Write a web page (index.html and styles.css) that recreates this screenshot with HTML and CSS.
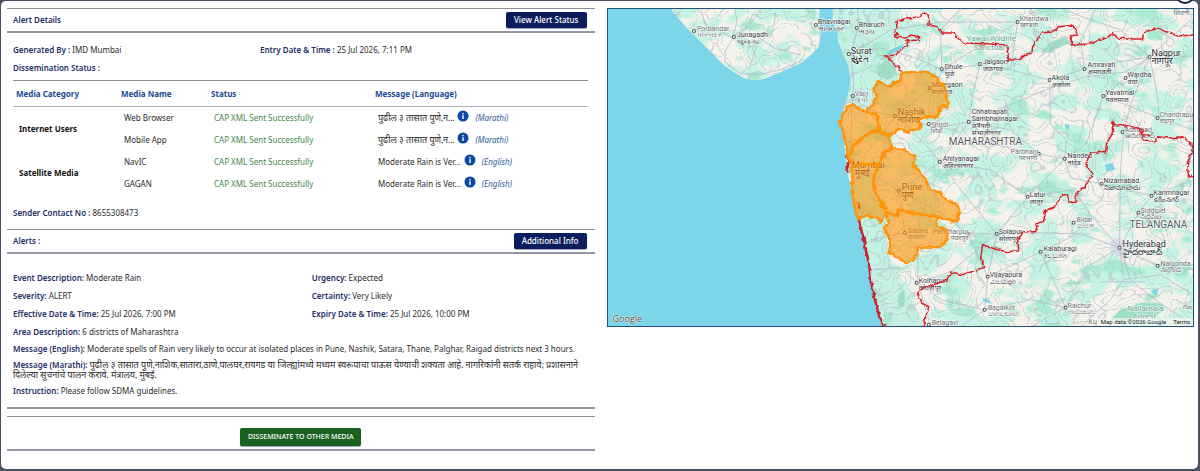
FILE: index.html
```html
<!DOCTYPE html>
<html lang="en">
<head>
<meta charset="utf-8">
<title>Alert Details</title>
<link rel="stylesheet" href="styles.css">
</head>
<body>
<svg class="defs" aria-hidden="true">
  <symbol id="info" viewBox="0 0 12 12"><circle cx="6" cy="6" r="5.5" fill="#0d47a1"/><rect x="5.3" y="5.2" width="1.4" height="3.8" fill="#fff"/><rect x="5.3" y="2.9" width="1.4" height="1.4" fill="#fff"/></symbol>
</svg>
<main class="dialog">
  <button class="close" aria-label="Close"></button>
  <section class="details">
    <header class="bar">
      <h2>Alert Details</h2>
      <button class="btn">View Alert Status</button>
    </header>
    <div class="block source">
      <div class="pair source-pair">
        <p><b>Generated By :</b> IMD Mumbai</p>
        <p><b>Entry Date &amp; Time :</b> 25 Jul 2026, 7:11 PM</p>
      </div>
      <p><b>Dissemination Status :</b></p>
      <table class="media">
        <thead>
          <tr><th class="c1">Media Category</th><th class="c2">Media Name</th><th class="c3">Status</th><th>Message (Language)</th></tr>
        </thead>
        <tbody>
          <tr><th scope="rowgroup" rowspan="2">Internet Users</th><td>Web Browser</td><td class="ok">CAP XML Sent Successfully</td><td><span class="msg"><span lang="mr">पुढील ३ तासात पुणे,न...</span><svg class="info"><use href="#info"/></svg><i>(Marathi)</i></span></td></tr>
          <tr><td>Mobile App</td><td class="ok">CAP XML Sent Successfully</td><td><span class="msg"><span lang="mr">पुढील ३ तासात पुणे,न...</span><svg class="info"><use href="#info"/></svg><i>(Marathi)</i></span></td></tr>
          <tr><th scope="rowgroup" rowspan="2">Satellite Media</th><td>NavIC</td><td class="ok">CAP XML Sent Successfully</td><td><span class="msg"><span>Moderate Rain is Ver...</span><svg class="info"><use href="#info"/></svg><i>(English)</i></span></td></tr>
          <tr><td>GAGAN</td><td class="ok">CAP XML Sent Successfully</td><td><span class="msg"><span>Moderate Rain is Ver...</span><svg class="info"><use href="#info"/></svg><i>(English)</i></span></td></tr>
        </tbody>
      </table>
      <p class="sender"><b>Sender Contact No :</b> 8655308473</p>
    </div>
    <header class="bar">
      <h2>Alerts :</h2>
      <button class="btn">Additional Info</button>
    </header>
    <div class="block alert">
      <div class="pair">
        <p><b>Event Description:</b> Moderate Rain</p>
        <p><b>Urgency:</b> Expected</p>
        <p><b>Severity:</b> ALERT</p>
        <p><b>Certainty:</b> Very Likely</p>
        <p><b>Effective Date &amp; Time:</b> 25 Jul 2026, 7:00 PM</p>
        <p><b>Expiry Date &amp; Time:</b> 25 Jul 2026, 10:00 PM</p>
      </div>
      <p><b>Area Description:</b> 6 districts of Maharashtra</p>
      <p><b>Message (English):</b> Moderate spells of Rain very likely to occur at isolated places in Pune, Nashik, Satara, Thane, Palghar, Raigad districts next 3 hours.</p>
      <p class="tight"><b>Message (Marathi):</b> <span lang="mr">पुढील ३ तासात पुणे,नाशिक,सातारा,ठाणे,पालघर,रायगड या जिल्ह्यांमध्ये मध्यम स्वरूपाचा पाऊस येण्याची शक्यता आहे. नागरिकांनी सतर्क राहावे; प्रशासनाने दिलेल्या सुचनांचे पालन करावे. मंत्रालय, मुंबई.</span></p>
      <p><b>Instruction:</b> Please follow SDMA guidelines.</p>
    </div>
    <footer class="actions"><button class="btn green">DISSEMINATE TO OTHER MEDIA</button></footer>
  </section>
  <section class="map" aria-label="Affected area map">
    <svg class="canvas" viewBox="607 9 586 317">
      <defs>
        <filter id="veg" x="0" y="0" width="100%" height="100%" color-interpolation-filters="sRGB">
          <feTurbulence type="fractalNoise" baseFrequency="0.034 0.045" numOctaves="5" seed="14"/>
          <feColorMatrix values="0 0 0 0 .77  0 0 0 0 .95  0 0 0 0 .89  8 0 0 0 -3.7"/>
        </filter>
        <filter id="forest" x="0" y="0" width="100%" height="100%" color-interpolation-filters="sRGB">
          <feTurbulence type="fractalNoise" baseFrequency="0.03 0.05" numOctaves="4" seed="31"/>
          <feColorMatrix values="0 0 0 0 .66  0 0 0 0 .92  0 0 0 0 .82  0 8 0 0 -4.9"/>
        </filter>
        <filter id="lanes" x="0" y="0" width="100%" height="100%" color-interpolation-filters="sRGB">
          <feTurbulence type="fractalNoise" baseFrequency="0.035" numOctaves="2" seed="5"/>
          <feColorMatrix values="0 0 0 0 .70  0 0 0 0 .74  0 0 0 0 .78  0 0 1 0 0"/>
          <feComponentTransfer><feFuncA type="discrete" tableValues="0 0 0 0 0 0 0 0 0 0 0 0 0 0 0 0 0 .5 0 0 0 0 .5 0 0 0 0 .5 0 0 0 0 0 0 0 0 0 0 0 0 0 0 0 0 0 0 0 0 0 0"/></feComponentTransfer>
        </filter>
        <filter id="rough" filterUnits="userSpaceOnUse" x="600" y="0" width="600" height="335">
          <feTurbulence type="fractalNoise" baseFrequency="0.22" numOctaves="2" seed="3"/>
          <feDisplacementMap in="SourceGraphic" scale="4" xChannelSelector="R" yChannelSelector="G"/>
        </filter>
        <clipPath id="land">
          <path d="M669 8L683 25L700 42L715 57L724 66L733 72L743 78L752 80L763 79L780 72L800 63L810 55L818 47L820 32L818 20L819 8Z"/>
          <path d="M832 8L832 20L837 30L837 40L843 55L848 67L850 80L847 97L842 112L840 123L843 140L845 157L846 170L850 187L854 203L858 220L863 240L868 263L871 287L875 303L880 323L884 328H1195V8Z"/>
        </clipPath>
        <path id="dots" d="M693 31h0M733 37h0M815 25h0M856 28h0M848 54h0M852 96h0M941 69h0M929 88h0M979 64h0M1017 22h0M1149 57h0M1084 69h0M1049 80h0M1125 78h0M1103 96h0M1157 118h0M968 122h0M894 116h0M928 124h0M939 162h0M898 191h0M904 233h0M967 234h0M916 283h0M928 325h0M1038 154h0M1064 159h0M1122 132h0M1101 184h0M1151 196h0M1138 213h0M1027 197h0M1073 223h0M1119 248h0M996 234h0M1040 252h0M987 277h0M984 310h0M1065 308h0M1157 266h0"/>
      </defs>
      <rect x="606" y="8" width="588" height="319" fill="#7dd5e9"/>
      <g clip-path="url(#land)">
        <rect x="606" y="8" width="588" height="319" fill="#f4f2ea"/>
        <path fill="#c5efe2" d="M832 8L900 8L892 50L898 80L870 110L850 105L846 70ZM846 160L880 200L888 255L925 327L880 327L862 240Z"/>
        <rect x="606" y="8" width="588" height="319" filter="url(#veg)"/>
        <rect x="606" y="8" width="588" height="319" filter="url(#forest)"/>
        <path fill="#9fdfc6" d="M1040 52L1050 42L1065 36L1070 43L1060 47L1048 53ZM877 66L886 60L894 66L896 74L886 80L878 76ZM1108 322L1120 310L1140 303L1162 304L1164 311L1150 318L1130 320ZM897 295L904 290L904 306L898 308Z"/>
        <rect x="606" y="8" width="588" height="319" filter="url(#lanes)"/>
        <path fill="#7dd5e9" d="M886 53L893 48L904 44L898 51L888 55ZM1104 165L1112 163L1114 170L1106 172ZM1064 124L1069 125L1068 130L1065 129ZM1150 291L1158 289L1156 296ZM985 40L988 38L987 42ZM981 298L988 300L992 304L984 302Z"/>
        <path fill="#d6dcea" d="M1110 241L1119 238L1127 243L1126 254L1118 257L1110 252ZM847 157L853 158L856 168L850 171ZM891 186L904 185L907 196L896 199Z"/>
        <g class="roads">
          <path d="M734 9L736 22L731 40L724 52L724 62L738 73L757 75L782 69L802 60M731 37L748 26L760 9M736 38L752 34L775 49L800 55M696 31L716 30L732 38M700 10L706 28L699 37M775 12L772 31L756 45L748 70"/>
          <path d="M857 8L857 28L850 54L853 85L851 110L850 150L855 168M850 54L880 48L915 58L942 70L979 65L1010 70L1049 80L1084 69L1118 62L1149 57L1195 56M942 70L931 88L895 116L856 165L898 191L904 233L917 250L917 283L930 327"/>
          <path d="M852 100L875 112L895 116L936 128L968 122L1002 108L1045 90L1084 77L1125 72L1149 57M895 116L920 140L940 162L968 122L972 95L979 65M898 191L940 162M898 191L940 213L967 234L996 234L1035 233L1080 234L1119 248"/>
          <path d="M968 122L995 145L1038 154L1064 159L1085 145L1103 96L1125 78L1149 57L1190 20M1064 159L1066 140L1050 125L1049 80M1027 197L1064 159M1027 197L996 234L987 277L984 310L960 327M1149 57L1130 105L1123 132L1120 170L1119 248M1149 57L1120 30L1085 18L1060 8M1017 22L1010 70"/>
          <path d="M1119 248L1123 280L1110 300L1080 327M1119 248L1130 280L1155 300L1193 326M1119 248L1157 266L1193 270M1119 248L1138 213L1151 196L1193 180M1119 248L1090 215L1073 190L1027 197M1119 248L1085 268L1065 308L1030 327M1040 252L1075 235M1040 252L1065 308M987 277L1040 252M917 283L950 272L996 234M872 270L900 268L917 283M904 233L870 240M984 310L1030 300L1065 308M1149 57L1156 90L1159 118L1193 130M1101 184L1151 196M967 234L987 277"/>
          <path d="M940 162L960 190L996 234M940 162L990 170L1027 197M941 70L940 30L960 8M941 70L1017 22L1040 8M850 54L890 30L940 22L1017 22M1103 96L1159 118M1084 69L1080 40L1095 10M968 122L1010 130L1038 154M1101 184L1070 178L1064 159M1123 280L1160 275L1193 295M1100 282L1145 282M917 283L940 300L984 310"/>
        </g>
      </g>
      <g class="labels region">
        <text x="948" y="142">MAHARASHTRA</text><text x="1129" y="225">TELANGANA</text>
      </g>
      <g class="labels park">
        <text x="966" y="39">Yawal Wildlife<tspan x="973" dy="8">Sanctuary</tspan></text>
        <text x="1127" y="309">Nallamala<tspan x="1133" dy="7">Forest</tspan></text>
      </g>
      <use href="#dots" class="dot ring"/>
      <use href="#dots" class="dot core"/>
      <g class="labels minor">
        <text x="696" y="29">Porbandar<tspan x="696" dy="6">પોરબંદર</tspan></text>
        <text x="854" y="94">Vapi<tspan x="854" dy="6">વાપી</tspan></text>
        <text x="1019" y="19">Khandwa<tspan x="1019" dy="6">खण्डवा</tspan></text>
        <text x="1159" y="115">Chandrapu<tspan x="1159" dy="6">चंद्रपूर</tspan></text>
        <text x="930" y="125">Shirdi<tspan x="930" dy="6">शिर्डी</tspan></text>
        <text x="1010" y="152">Parbhani<tspan x="1018" dy="6">परभणी</tspan></text>
        <text x="1124" y="130">Adilabad<tspan x="1124" dy="6">ఆదిలాబాద్</tspan></text>
        <text x="1140" y="211">Siddipet<tspan x="1140" dy="6">సిద్దిపేట</tspan></text>
        <text x="1076" y="220">Bidar<tspan x="1076" dy="6">ಬೀದರ್</tspan></text>
        <text x="932" y="232">Pandharpur<tspan x="950" dy="6">पंढरपूर</tspan></text>
        <text x="987" y="308">Bagalkot<tspan x="987" dy="6">ಬಾಗಲಕೋಟೆ</tspan></text>
        <text x="1067" y="306">Raichur<tspan x="1067" dy="6">ರಾಯಚೂರು</tspan></text>
        <text x="1160" y="264">Nalgonda<tspan x="1160" dy="6">నల్గొండ</tspan></text>
        <text x="907" y="231">Satara<tspan x="907" dy="6">सातारा</tspan></text>
        <text x="931" y="323">Belagavi</text>
        <text x="1173" y="13">सिवनी</text>
        <text x="1088" y="322">Ku</text>
        <text x="1183" y="307">గుం</text>
      </g>
      <g class="labels town">
        <text x="736" y="35">Junagadh<tspan x="736" dy="7">જૂનાગઢ</tspan></text>
        <text x="817" y="22">Bhavnagar<tspan x="817" dy="7">ભાવનગર</tspan></text>
        <text x="858" y="25">Bharuch<tspan x="858" dy="7">ભરૂચ</tspan></text>
        <text x="944" y="67">Dhule<tspan x="944" dy="7">धुळे</tspan></text>
        <text x="931" y="85">Malegaon<tspan x="931" dy="7">मालेगाव</tspan></text>
        <text x="982" y="62">Jalgaon<tspan x="982" dy="7">जळगाव</tspan></text>
        <text x="1087" y="65">Amravati<tspan x="1087" dy="7">अमरावती</tspan></text>
        <text x="1051" y="78">Akola<tspan x="1051" dy="7">अकोला</tspan></text>
        <text x="1127" y="75">Wardha<tspan x="1127" dy="7">वर्धा</tspan></text>
        <text x="1105" y="93">Yavatmal<tspan x="1105" dy="7">यवतमाळ</tspan></text>
        <text x="971" y="112">Chhatrapati<tspan x="971" dy="7">Sambhajinagar</tspan><tspan x="971" dy="7">छत्रपती</tspan><tspan x="971" dy="7">संभाजीनगर</tspan></text>
        <text x="942" y="159">Ahilyanagar<tspan x="942" dy="7">अहिल्यानगर</tspan></text>
        <text x="918" y="281">Kolhapur<tspan x="918" dy="7">कोल्हापूर</tspan></text>
        <text x="1067" y="156">Nanded<tspan x="1067" dy="7">नांदेड</tspan></text>
        <text x="1103" y="181">Nizamabad<tspan x="1103" dy="7">నిజామాబాదు</tspan></text>
        <text x="1153" y="193">Karimnagar<tspan x="1153" dy="7">కరీంనగర్</tspan></text>
        <text x="1029" y="195">Latur<tspan x="1029" dy="7">लातूर</tspan></text>
        <text x="998" y="232">Solapur<tspan x="998" dy="7">सोलापूर</tspan></text>
        <text x="1043" y="249">Kalaburagi<tspan x="1043" dy="7">ಕಲಬುರಗಿ</tspan></text>
        <text x="989" y="275">Vijayapura<tspan x="989" dy="7">ವಿಜಯಪುರ</tspan></text>
      </g>
      <g class="labels city">
        <text x="850" y="51">Surat<tspan x="850" dy="8">સુરત</tspan></text>
        <text x="1151" y="53">Nagpur<tspan x="1151" dy="8">नागपूर</tspan></text>
        <text x="897" y="112">Nashik<tspan x="897" dy="8">नाशिक</tspan></text>
        <text x="851" y="165">Mumbai<tspan x="854" dy="8">मुंबई</tspan></text>
        <text x="901" y="187">Pune<tspan x="901" dy="8">पुणे</tspan></text>
        <text x="1122" y="244">Hyderabad<tspan x="1122" dy="8">హైదరాబాద్</tspan></text>
      </g>
      <g filter="url(#rough)">
        <path class="border" d="M901 72L898 67L893 65L891 60L884 56L895 55L900 50L907 45L905 41L918 40L920 37L910 35L905 38L894 37L897 33L894 32L897 27L895 22L907 18L918 17L924 12L929 18L928 25L937 27L942 33L953 33L958 38L963 43L990 44L1006 45L1008 60L1020 60L1023 55L1031 53L1032 47L1037 39L1040 33L1052 32L1057 27L1072 25L1077 35L1069 36L1072 45L1088 44L1103 39L1112 34L1117 38L1127 39L1142 39L1143 33L1155 28L1170 33L1177 36L1196 35"/>
        <path class="border" d="M1196 177L1188 177L1187 163L1192 152L1190 143L1182 137L1168 138L1157 137L1155 143L1143 140L1142 135L1137 128L1123 125L1115 126L1112 121L1113 130L1110 137L1106 143L1105 153L1090 152L1085 165L1093 175L1087 182L1083 188L1077 192L1074 203L1068 202L1067 195L1062 195L1053 208L1045 210L1043 222L1037 223L1035 232L1023 232L1017 240L1018 251L1007 252L997 250L982 245L980 257L983 268L970 272L962 275L950 272L947 280L933 285L923 288L917 293L920 303L928 307L925 317L922 328M1137 128L1144 131L1139 134L1150 136"/>
        <path class="coast" d="M858 220L863 240L868 263L871 287L875 303L880 323L886 329M845 155L849 161L846 168L848 173M857 203L859 209"/>
        <g class="district">
          <path d="M901 73L913 72L927 72L932 76L937 77L938 82L943 85L945 92L946 100L948 102L947 108L942 105L938 112L937 117L927 117L917 120L921 125L917 130L910 130L908 133L898 129L888 137L880 132L877 123L876 115L866 112L867 108L873 105L873 100L877 97L873 92L877 81L883 84L890 87L892 83L899 81Z"/>
          <path d="M843 113L845 109L852 104L857 108L862 110L866 112L876 115L877 123L878 131L870 132L863 137L855 142L852 147L852 152L847 155L845 143L842 130L839 122Z"/>
          <path d="M852 152L852 147L863 137L870 132L880 132L888 137L889 143L893 148L883 152L880 160L878 166L866 164L852 166L847 156Z"/>
          <path d="M850 167L858 165L878 165L873 177L873 187L877 197L885 208L885 215L880 223L877 218L870 218L867 215L860 218L857 220L853 203L851 187L852 177Z"/>
          <path d="M885 152L893 148L902 149L908 153L915 157L912 165L918 170L925 180L930 190L940 193L942 197L952 203L957 205L959 212L957 215L958 220L952 222L938 217L927 216L917 214L898 210L897 216L885 212L877 197L873 187L873 177L880 160Z"/>
          <path d="M898 210L917 214L938 217L935 225L945 230L947 235L945 243L938 247L927 248L917 247L917 253L913 260L905 263L895 257L888 253L890 243L887 235L883 228L888 223L885 212L897 216Z"/>
        </g>
      </g>
    </svg>
    <span class="google">Google</span>
    <span class="credit"><span>Map data ©2026 Google</span><a href="#">Terms</a></span>
  </section>
</main>
</body>
</html>
```
FILE: styles.css
```css
* { box-sizing: border-box; }

body {
  margin: 0;
  padding: 1px 2px 1px 1px;
  background: #4b5263;
  font: 8px/12px "Noto Sans", sans-serif;
  color: #2b2b2b;
}

.defs { display: none; }

.dialog {
  position: relative;
  display: grid;
  grid-template-columns: 1fr 1fr;
  gap: 12px;
  align-items: start;
  padding: 7px 4px 18px 6px;
  background: #fff;
  border-radius: 5px;
}

.close {
  position: absolute;
  top: -17px;
  right: 3px;
  width: 20px;
  height: 20px;
  padding: 0;
  border: 2px solid #16204a;
  border-radius: 50%;
  background: #fff;
}

h2, p { margin: 0; }

h2, b {
  font-size: 8px;
  font-weight: 600;
  color: #1d2d66;
}

.bar {
  display: flex;
  align-items: center;
  justify-content: space-between;
  height: 25px;
  padding: 0 8px 0 6px;
  border-top: 1px solid #8b8f99;
  border-bottom: 2px solid #9397a1;
}

.btn {
  height: 16px;
  padding: 0 8px;
  border: 0;
  border-radius: 2px;
  background: #0d1c5c;
  color: #fff;
  font: 500 8px/16px "Noto Sans", sans-serif;
  box-shadow: 0 1px 1px #9aa0b5;
}

.block { padding: 0 7px 0 6px; }
.source { padding-top: 11px; padding-bottom: 10px; }
.alert { padding-top: 18px; padding-bottom: 5px; }

.block p { margin-bottom: 6px; }
.alert > p { margin-bottom: 5px; }

.pair {
  display: grid;
  grid-template-columns: 52% 48%;
}

.source-pair { grid-template-columns: 43% 57%; }

.media {
  width: 100%;
  border-collapse: collapse;
  table-layout: fixed;
  border-top: 1px solid #8b8f99;
}

.c1 { width: 105px; }
.c2 { width: 90px; }
.c3 { width: 164px; }

.media th, .media td {
  padding: 0 6px;
  text-align: left;
}

.media thead th {
  height: 26px;
  padding: 0 3px;
  border-bottom: 1px solid #a9b2bd;
  color: #174a94;
  font-weight: 700;
}

.media tbody th { color: #111; font-weight: 700; }
.media tbody tr { height: 22px; }
.media .ok { color: #43884a; }

.msg {
  display: flex;
  align-items: center;
  white-space: nowrap;
}

.info {
  width: 12px;
  height: 12px;
  margin: 0 6px 4px 3px;
}

.msg i { color: #2c5b9a; }

.block .sender { margin: 12px 0 0; }

.tight { line-height: 10px; }

[lang="mr"] { font-family: Lato, "Noto Sans", sans-serif; font-size: 9px; }

.actions {
  display: flex;
  justify-content: center;
  margin-top: 7px;
  padding: 11px 0 3px;
  border-top: 1px solid #8b8f99;
  border-bottom: 2px solid #9397a1;
}

.alert { border-bottom: 2px solid #9397a1; }

.green {
  height: 18px;
  background: #19611f;
  font-size: 7px;
}

.map {
  position: relative;
  border: 1px solid #24507c;
}

.canvas {
  display: block;
  width: 100%;
  height: auto;
}

.roads {
  fill: none;
  stroke: #b3bccd;
  stroke-width: 1;
  opacity: .8;
}

.labels {
  font-family: Roboto, "Noto Sans", sans-serif;
  dominant-baseline: central;
  fill: #4a4f55;
  stroke: #fff;
  stroke-width: 1px;
  paint-order: stroke;
}

.minor { font-size: 7px; fill: #686d72; }
.town { font-size: 7px; fill: #33373c; }
.city { font-size: 9px; fill: #24282c; }
.region { font-size: 10px; fill: #55595e; }
.park { font-size: 8px; fill: #5da287; }

.dot { fill: none; stroke-linecap: round; }
.ring { stroke: #555; stroke-width: 4; }
.core { stroke: #fff; stroke-width: 2; }

.border { fill: none; stroke: #dc1f2a; stroke-width: 1.5; }
.coast { fill: none; stroke: #c8202f; stroke-width: 2.5; }

.district {
  fill: #ff9100;
  fill-opacity: .58;
  stroke: #ff9307;
  stroke-width: 2.5;
  stroke-linejoin: round;
}

.google {
  position: absolute;
  left: 5px;
  bottom: 1px;
  color: #444;
  font: 500 9px/12px "Open Sans", sans-serif;
  text-shadow: 0 0 1px #fff, 0 0 1px #fff, 0 0 2px #fff;
}

.credit {
  position: absolute;
  right: 0;
  bottom: 0;
  display: flex;
  gap: 7px;
  padding: 0 3px;
  background: #f5f5f5b8;
  color: #222;
  font: 6px/8px Roboto, sans-serif;
}

.credit a { color: inherit; text-decoration: none; }
```
